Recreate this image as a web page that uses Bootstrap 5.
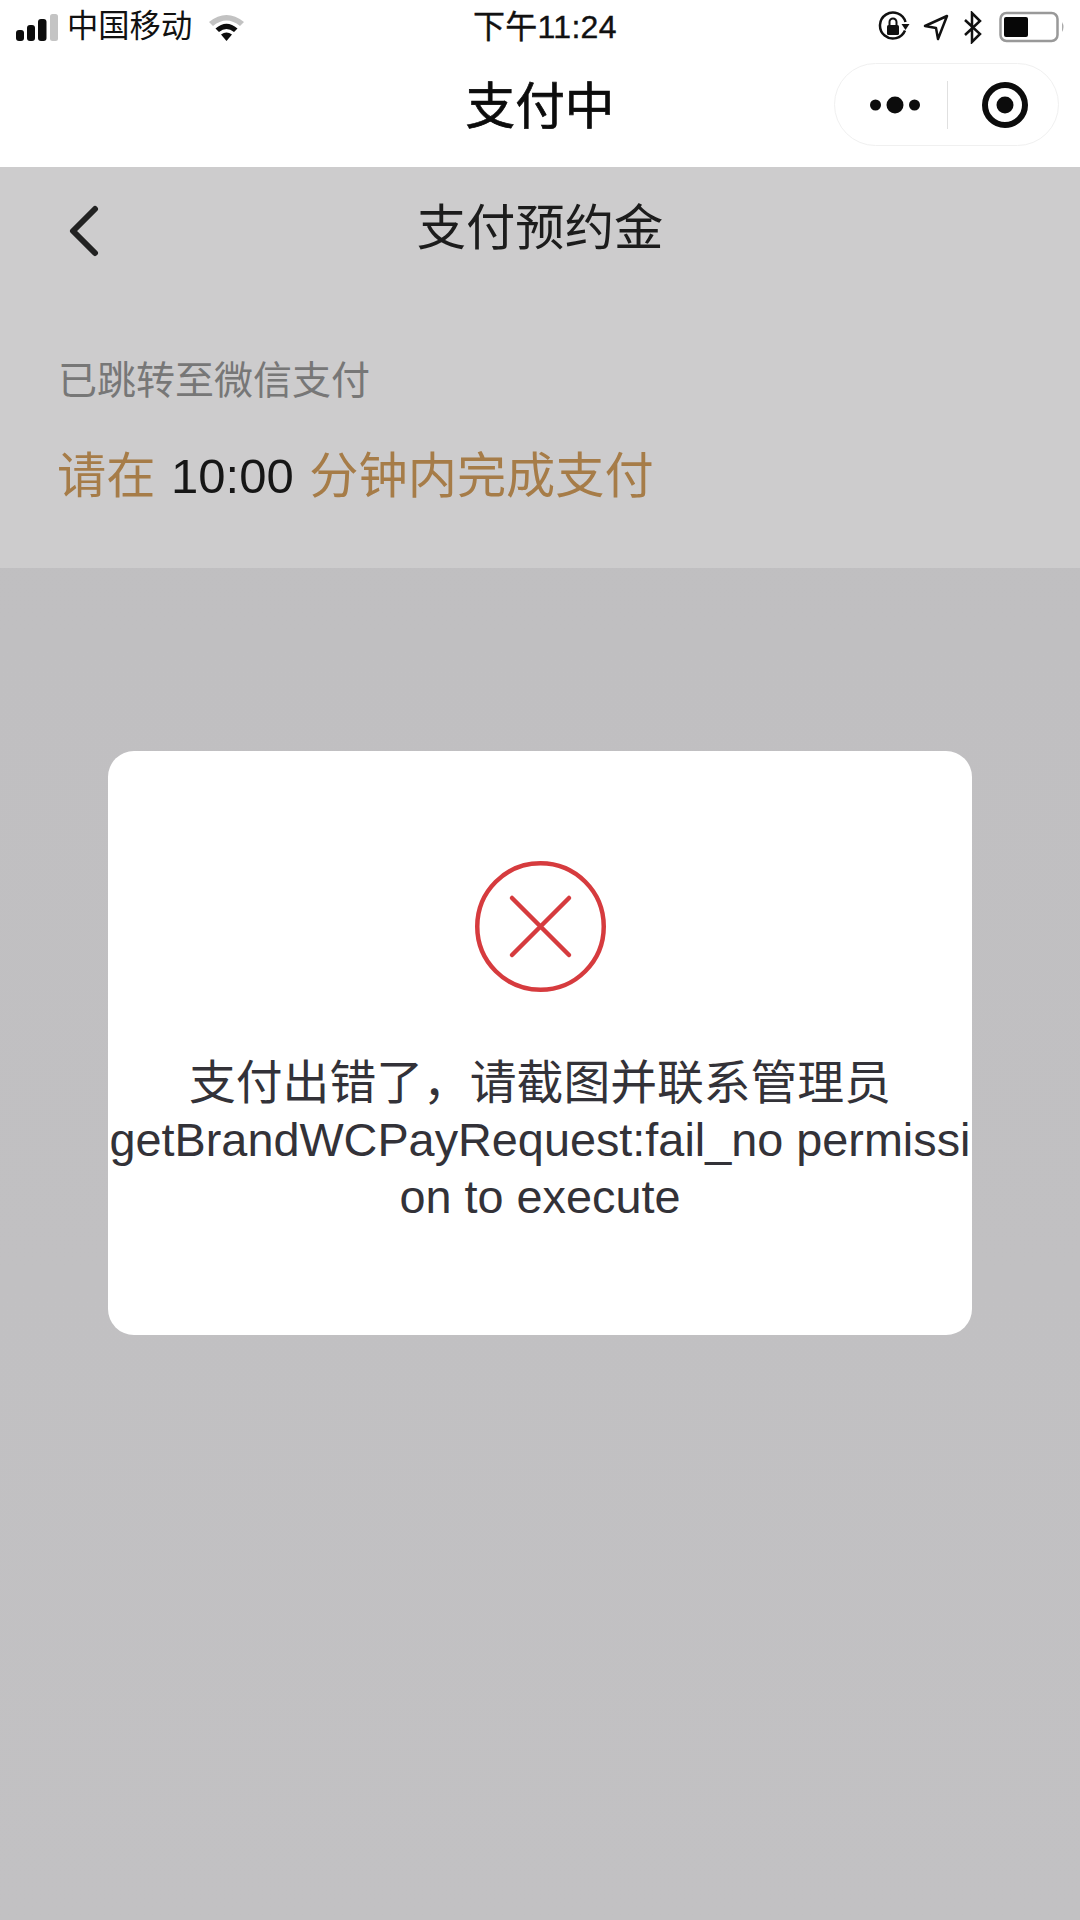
<!DOCTYPE html>
<html lang="zh-CN">
<head>
<meta charset="utf-8">
<title>支付中</title>
<link href="https://cdn.jsdelivr.net/npm/bootstrap@5.3.0/dist/css/bootstrap.min.css" rel="stylesheet">
<style>
html,body{height:1920px;overflow:hidden}
body{background:linear-gradient(#bfbec0,#c2c1c3);font-family:"Liberation Sans","Noto Sans CJK SC",sans-serif;color:#111}
.top-head{height:167px;background:#fff;position:relative}
.status-line{height:54px;padding:0 12px 0 16px;position:relative}
.carrier{font-size:31.300px;line-height:54px;margin-left:9px;color:#111}
.clock{font-size:32px;line-height:54px;position:absolute;left:473px;top:0;letter-spacing:.3px;-webkit-text-stroke:.4px #111}
.title-line{height:113px;justify-content:center;padding-bottom:5px}
.title-main{font-size:49.600px;line-height:1;-webkit-text-stroke:.7px #0c0c0c;color:#0c0c0c}
.capsule{position:absolute;left:834px;top:63px;width:225px;height:83px;border:1px solid #f0f0f0;border-radius:42px}
.capsule-rule{width:1px;height:48px;background:#e0e0e0;margin-left:27px}
.pay-panel{height:401px;background:#cdcccd;padding:0 58px;position:relative}
.sub-title-row{height:121px;justify-content:center}
.sub-title{font-size:49.300px;line-height:1;color:#1c1c1c}
.back-arrow{position:absolute;left:66px;top:38px}
.hint{font-size:39px;line-height:1;color:#777;margin-top:73px}
.count{font-size:49.200px;line-height:1;color:#a67c48;margin-top:51px;word-spacing:2px;margin-left:-1px}
.count b{font-weight:400;color:#161616;font-size:49px}
.dlg{width:864px;height:584px;margin:183px auto 0;background:#fff;border-radius:26px;padding-top:110px}
.dlg-text{margin-top:63px;font-size:46.800px;line-height:57px;color:#333238;word-break:break-all;text-align:center}
</style>
</head>
<body>
<div class="top-head">
  <div class="status-line d-flex align-items-center">
    <svg width="42" height="28" viewBox="0 0 42 28"><rect x="0" y="17" width="8" height="11" rx="3" fill="#0c0c0c"/><rect x="11" y="12" width="8" height="16" rx="3" fill="#0c0c0c"/><rect x="22" y="6" width="8.500" height="22" rx="3" fill="#0c0c0c"/><rect x="34" y="1" width="8" height="27" rx="2.500" fill="#c4c4c4"/></svg>
    <span class="carrier">中国移动</span>
    <svg style="margin-left:16px" width="37" height="30" viewBox="0 0 37 30"><path d="M1 10 Q18.500 -4 36 10 L32 14 Q18.500 3 5 14Z" fill="#c2c2c2"/><path d="M7.500 16.500 Q18.500 7 29.500 16.500 L26 20 Q18.500 14 11 20Z" fill="#0c0c0c"/><path d="M13 22.500 Q18.500 18.500 24 22.500 L18.500 29Z" fill="#0c0c0c"/></svg>
    <span class="clock">下午11:24</span>
    <div class="ms-auto d-flex align-items-center">
      <svg width="32" height="32" viewBox="0 0 32 32" fill="none"><path d="M27 19.500 A13 13 0 1 1 27.500 11" stroke="#111" stroke-width="2.500"/><path d="M23.500 13 L31.500 13 L27.500 19Z" fill="#111"/><rect x="9" y="14" width="12" height="10" rx="1.500" fill="#111"/><path d="M11.500 14 V11 A3.500 3.500 0 0 1 18.500 11 V14" stroke="#111" stroke-width="2"/></svg>
      <svg style="margin-left:13px" width="26" height="27" viewBox="0 0 26 27" fill="none"><path d="M2 12 L24 2 L15 25 L13 14Z" stroke="#111" stroke-width="2.500" stroke-linejoin="round"/></svg>
      <svg style="margin-left:14px" width="20" height="33" viewBox="0 0 20 33" fill="none"><path d="M2 9 L17 23 L9 31 V2 L17 10 L2 24" stroke="#111" stroke-width="2.500"/></svg>
      <svg style="margin-left:16px" width="69" height="32" viewBox="0 0 69 32" fill="none"><rect x="1.500" y="2" width="57" height="28" rx="6" stroke="#999" stroke-width="2.500"/><rect x="5" y="6" width="24" height="20" rx="2" fill="#070707"/><path d="M63 11 Q66 16 63 21Z" fill="#aaa"/></svg>
    </div>
  </div>
  <div class="title-line d-flex align-items-center"><span class="title-main">支付中</span></div>
  <div class="capsule d-flex align-items-center">
    <svg style="margin-left:35px" width="50" height="20" viewBox="0 0 50 20"><circle cx="5.500" cy="10" r="5.500" fill="#0c0c0c"/><circle cx="25" cy="10" r="8.500" fill="#0c0c0c"/><circle cx="44.500" cy="10" r="5.500" fill="#0c0c0c"/></svg>
    <span class="capsule-rule"></span>
    <svg style="margin-left:34px" width="46" height="46" viewBox="0 0 46 46"><circle cx="23" cy="23" r="20" fill="none" stroke="#0c0c0c" stroke-width="6"/><circle cx="23" cy="23" r="8.500" fill="#0c0c0c"/></svg>
  </div>
</div>
<div class="pay-panel">
  <svg class="back-arrow" width="34" height="52" viewBox="0 0 34 52" fill="none"><path d="M29 4 L7 26 L29 48" stroke="#222" stroke-width="6" stroke-linecap="round" stroke-linejoin="round"/></svg>
  <div class="sub-title-row d-flex align-items-center"><span class="sub-title">支付预约金</span></div>
  <div class="hint">已跳转至微信支付</div>
  <div class="count">请在 <b>10:00</b> 分钟内完成支付</div>
</div>
<div class="dlg">
  <svg class="d-block mx-auto" width="131" height="131" viewBox="0 0 131 131" fill="none"><circle cx="65.500" cy="65.500" r="63.250" stroke="#d63b3e" stroke-width="4.500"/><path d="M37 37 L94 94 M94 37 L37 94" stroke="#d63b3e" stroke-width="4.500" stroke-linecap="round"/></svg>
  <div class="dlg-text">支付出错了，请截图并联系管理员<br>getBrandWCPayRequest:fail_no permission to execute</div>
</div>
</body>
</html>
